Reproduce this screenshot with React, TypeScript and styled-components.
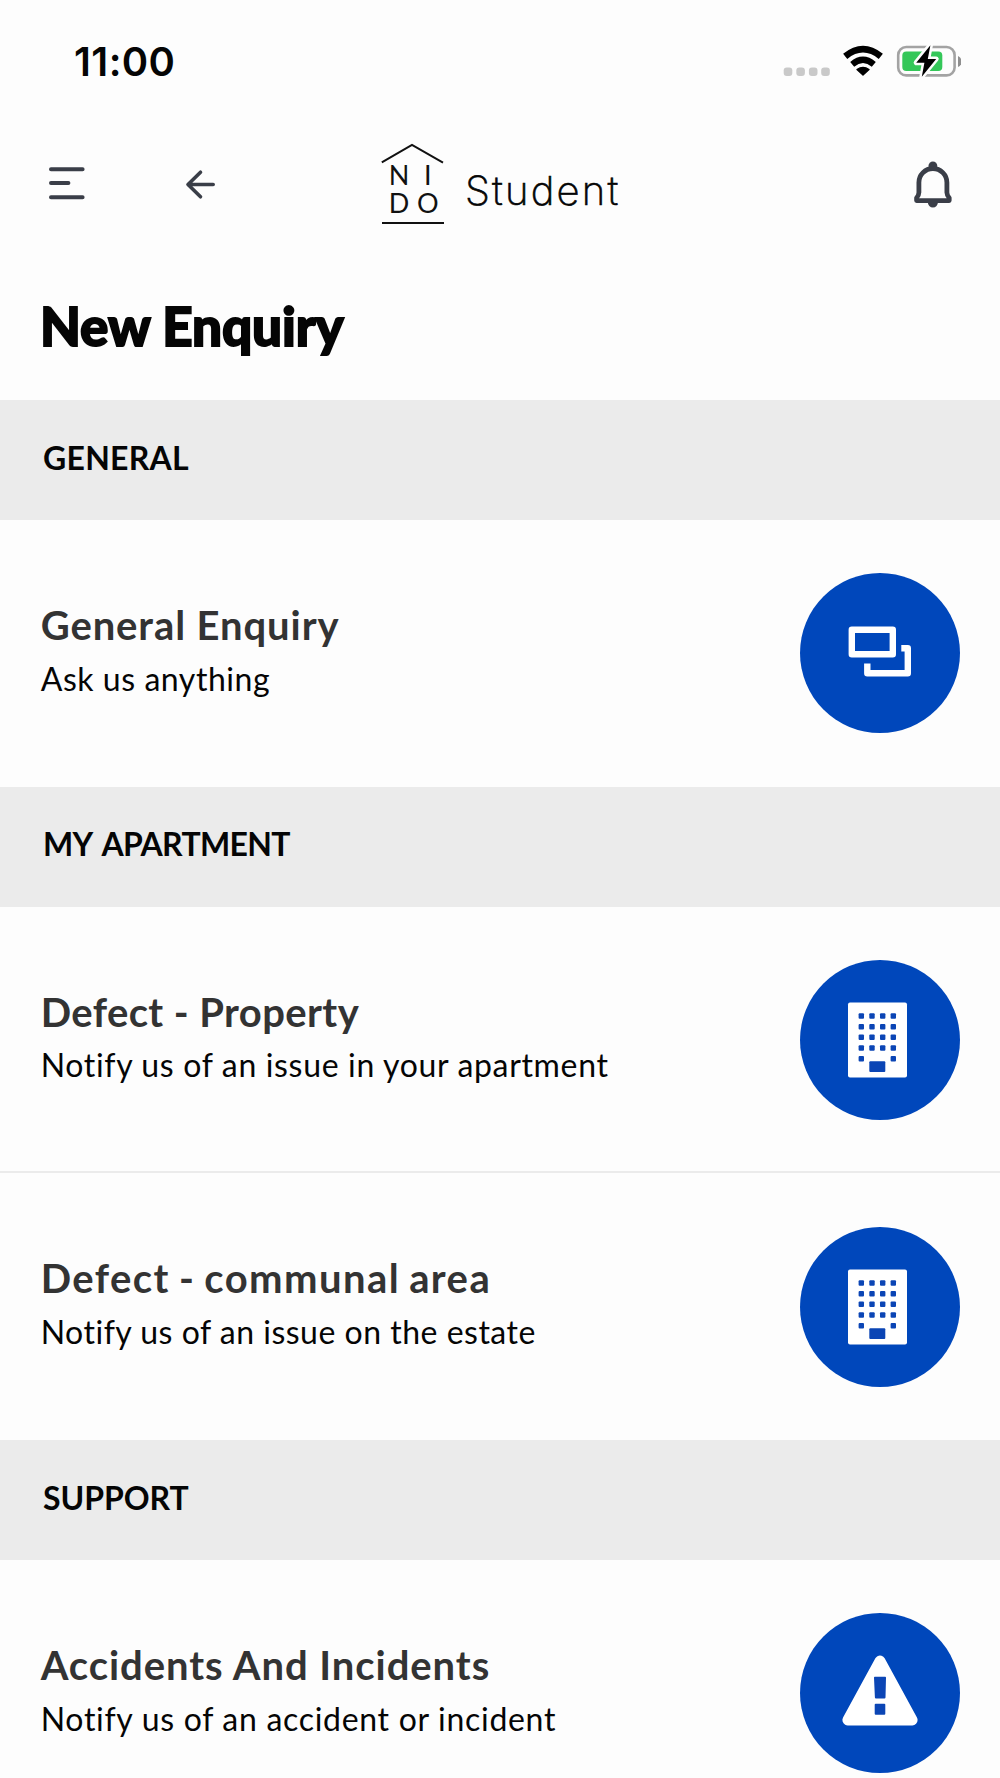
import React from 'react';
import styled, { createGlobalStyle } from 'styled-components';

const GlobalStyle = createGlobalStyle`
  * { box-sizing: border-box; }
  body { margin: 0; background: #fdfdfd; }
`;

const Screen = styled.main`
  display: flex;
  flex-direction: column;
  width: 1000px;
  height: 1778px;
  overflow: hidden;
  background: #fdfdfd;
  color: #050505;
  font-family: Lato, "Open Sans", sans-serif;

  svg { display: block; flex: none; }
`;

const StatusBar = styled.div`
  display: flex;
  flex: none;
  align-items: center;
  justify-content: space-between;
  height: 122px;
  padding: 0 39px 0 74px;
`;

const Clock = styled.time`
  padding-top: 1px;
  font: 600 40px/48px Inter, sans-serif;
  letter-spacing: 0.4px;
`;

const StatusIcons = styled.div`
  display: flex;
  align-items: center;
`;

const NavBar = styled.header`
  display: grid;
  grid-template-columns: 138px 242px 1fr 48px;
  align-items: center;
  flex: none;
  height: 126px;
  padding: 0 41px 2px 0;
`;

const NavButton = styled.button<{ $inset?: number }>`
  display: flex;
  padding: 0 0 0 ${(p) => p.$inset ?? 0}px;
  border: 0;
  background: none;
  color: #3a3e48;
`;

const Brand = styled.div`
  display: flex;
  align-items: center;
`;

const BrandName = styled.span`
  padding: 14px 0 0 19px;
  font: 200 40px/48px Inter, sans-serif;
  letter-spacing: 2.2px;
  -webkit-text-stroke: 0.6px currentColor;
`;

const LogoMark = styled.div`
  display: flex;
  flex-direction: column;
  width: 66px;
  height: 84px;
`;

const LogoLetters = styled.div`
  display: grid;
  grid-template-columns: 28px 22px;
  grid-auto-rows: 28px;
  margin: 0 2px 0 2px;
  padding: 0 0 5px 6.8px;
  border-bottom: 2px solid #111;
  font-size: 27px;
  line-height: 28px;
  color: #111;
`;

const LogoLetter = styled.span<{ $centered?: boolean }>`
  display: flex;
  justify-content: ${(p) => (p.$centered ? 'center' : 'flex-start')};
`;

const PageTitle = styled.h1`
  flex: none;
  height: 152px;
  margin: 0;
  padding: 45.5px 40px 0;
  font-size: 53px;
  line-height: 64px;
  font-weight: 900;
  letter-spacing: -0.1px;
  -webkit-text-stroke: 1.8px currentColor;
`;

const SectionHeader = styled.h2<{ $tracking: number }>`
  display: flex;
  align-items: center;
  flex: none;
  height: 120px;
  margin: 0;
  padding: 0 43px 4px;
  background: #ebebeb;
  font-size: 32px;
  line-height: 38.4px;
  font-weight: 700;
  letter-spacing: ${(p) => p.$tracking}px;
  word-spacing: 4px;
`;

const Row = styled.a`
  display: flex;
  align-items: center;
  justify-content: space-between;
  flex: none;
  height: 266.67px;
  padding: 0 40px 0 40.7px;

  & + & { box-shadow: 0 -2px 0 #ebebeb; }
`;

const RowText = styled.div`
  display: flex;
  flex-direction: column;
  gap: 10.6px;
  padding-bottom: 7.4px;
  white-space: nowrap;
  font-variant-ligatures: none;
`;

const RowTitle = styled.span<{ $tracking: number; $wordGap?: number }>`
  color: #333;
  font-size: 40px;
  line-height: 48px;
  font-weight: 700;
  letter-spacing: ${(p) => p.$tracking}px;
  word-spacing: ${(p) => p.$wordGap ?? 0}px;
`;

const RowSubtitle = styled.span<{ $tracking: number }>`
  font-size: 32px;
  line-height: 38.4px;
  letter-spacing: ${(p) => p.$tracking}px;
`;

const Badge = styled.svg`
  width: 160px;
  height: 160px;
  border-radius: 50%;
  background: #0047bb;
`;

const SignalDots = () => (
  <svg width="58" height="40" viewBox="783 41 58 40" fill="#c9c9c9">
    {[783.7, 796.3, 808.9, 821.2].map((x) => (
      <rect key={x} x={x} y="67.5" width="8.6" height="8.6" rx="3" />
    ))}
  </svg>
);

const WifiIcon = () => (
  <svg width="54" height="40" viewBox="841 41 54 40" fill="none" stroke="#000">
    <path d="M845.2 56.4 Q863 42 880.8 56.4" strokeWidth="6.6" />
    <path d="M852.2 64.3 Q863 55.2 873.8 64.3" strokeWidth="6.2" />
    <path d="M857 69.6 Q863 65.2 869 69.6 L863 75Z" fill="#000" strokeWidth="1.4" strokeLinejoin="round" />
  </svg>
);

const BatteryIcon = () => (
  <svg width="66" height="40" viewBox="895 41 66 40">
    <rect x="898.2" y="47" width="56.4" height="28.4" rx="8" fill="none" stroke="#a3a3a3" strokeWidth="2.6" />
    <path d="M958 56 Q961.5 57.5 961.5 61.5 Q961.5 65.5 958 67Z" fill="#8f8f8f" />
    <rect x="902.3" y="51.5" width="40" height="19.6" rx="4" fill="#34c759" />
    <path
      d="M930.4 45.2 L916.2 62.7 H924.4 L921.8 76.8 L936.2 59 H927.8Z"
      fill="#000"
      stroke="#fdfdfd"
      strokeWidth="5"
      strokeLinejoin="round"
      paintOrder="stroke"
    />
  </svg>
);

const MenuIcon = () => (
  <svg width="40" height="36" viewBox="0 0 40 36" stroke="currentColor" strokeWidth="4" strokeLinecap="round">
    <path d="M4 3.2H35.6M4 17H21.4M4 31.2H35.6" />
  </svg>
);

const BackIcon = () => (
  <svg width="32" height="32" viewBox="0 0 32 32" fill="none" stroke="currentColor" strokeWidth="3.6" strokeLinecap="round" strokeLinejoin="round">
    <path d="M28.2 16.5H3M15.5 4.2L3 16.5L15.5 28.8" />
  </svg>
);

const BellIcon = () => (
  <svg width="44" height="50" viewBox="911 158 44 50" fill="currentColor">
    <circle cx="932.9" cy="164.8" r="4.4" />
    <path d="M927.8 201 A5.1 5.6 0 0 0 938 201Z" />
    <path
      d="M918.9 181.5 A14 14 0 0 1 946.9 181.5 V191.5 Q947 194.5 949.2 196.8 V199.6 H916.6 V196.8 Q918.8 194.5 918.9 191.5Z"
      fill="none"
      stroke="currentColor"
      strokeWidth="4.8"
      strokeLinejoin="round"
    />
  </svg>
);

const NidoLogo = () => (
  <LogoMark>
    <svg width="66" height="19" viewBox="380 142 66 19" overflow="visible">
      <path d="M381.8 162.4 L412 145 L443 162.6" fill="none" stroke="#111" strokeWidth="2" />
    </svg>
    <LogoLetters>
      <LogoLetter>N</LogoLetter>
      <LogoLetter $centered>I</LogoLetter>
      <LogoLetter>D</LogoLetter>
      <LogoLetter $centered>O</LogoLetter>
    </LogoLetters>
  </LogoMark>
);

const ChatBadge = () => (
  <Badge viewBox="0 0 160 160" fill="none" stroke="#fff" strokeWidth="6.4" strokeLinejoin="round">
    <rect x="51.8" y="56.8" width="41" height="24.5" />
    <path d="M67.3 90.6 V100.2 H107.8 V75.2 H101.3" />
  </Badge>
);

const windowColumns = [61.3, 72, 82.7, 93.3];
const windowRows = [56, 66.7, 77.3, 88, 98.7];

const BuildingBadge = () => (
  <Badge viewBox="0 0 160 160" fill="#0b45b5">
    <rect x="48" y="42.4" width="59" height="75" rx="2" fill="#fff" />
    {windowRows.map((y, r) =>
      windowColumns
        .filter((_, c) => r < 4 || c === 0 || c === 3)
        .map((x) => <rect key={`${x}-${y}`} x={x - 2.7} y={y - 2.7} width="5.4" height="5.4" rx="1" />),
    )}
    <rect x="69.3" y="101.3" width="16" height="10.7" rx="1" />
  </Badge>
);

const WarningBadge = () => (
  <Badge viewBox="0 0 160 160" fill="#0b45b5">
    <path d="M80 47.8 L47.7 107.1 H112.3Z" fill="#fff" stroke="#fff" strokeWidth="10.6" strokeLinejoin="round" />
    <path d="M74.8 63.7 H85.2 Q86.1 63.7 86 64.7 L85.5 84.6 Q85.4 85.6 84.5 85.6 H75.9 Q75 85.6 74.9 84.6 L74 64.7 Q73.9 63.7 74.8 63.7Z" />
    <rect x="74.7" y="90.7" width="10.6" height="11" rx="1" />
  </Badge>
);

const badges = { chat: ChatBadge, building: BuildingBadge, warning: WarningBadge };

interface Enquiry {
  title: string;
  titleTracking: number;
  titleWordGap?: number;
  subtitle: string;
  subtitleTracking: number;
  badge: keyof typeof badges;
}

const sections: { name: string; tracking: number; items: Enquiry[] }[] = [
  {
    name: 'GENERAL',
    tracking: 0.25,
    items: [
      { title: 'General Enquiry', titleTracking: 0.9, subtitle: 'Ask us anything', subtitleTracking: 0.55, badge: 'chat' },
    ],
  },
  {
    name: 'MY APARTMENT',
    tracking: -0.65,
    items: [
      { title: 'Defect - Property', titleTracking: 0.4, subtitle: 'Notify us of an issue in your apartment', subtitleTracking: 0.66, badge: 'building' },
      { title: 'Defect - communal area', titleTracking: 1.42, titleWordGap: -2, subtitle: 'Notify us of an issue on the estate', subtitleTracking: 0.5, badge: 'building' },
    ],
  },
  {
    name: 'SUPPORT',
    tracking: -0.05,
    items: [
      { title: 'Accidents And Incidents', titleTracking: 0.94, subtitle: 'Notify us of an accident or incident', subtitleTracking: 0.7, badge: 'warning' },
    ],
  },
];

export default function App() {
  return (
    <>
      <GlobalStyle />
      <Screen>
        <StatusBar>
          <Clock>11:00</Clock>
          <StatusIcons>
            <SignalDots />
            <WifiIcon />
            <BatteryIcon />
          </StatusIcons>
        </StatusBar>
        <NavBar>
          <NavButton $inset={47} aria-label="Menu"><MenuIcon /></NavButton>
          <NavButton $inset={47} aria-label="Back"><BackIcon /></NavButton>
          <Brand>
            <NidoLogo />
            <BrandName>Student</BrandName>
          </Brand>
          <NavButton aria-label="Notifications"><BellIcon /></NavButton>
        </NavBar>
        <PageTitle>New Enquiry</PageTitle>
        {sections.map((section) => (
          <React.Fragment key={section.name}>
            <SectionHeader $tracking={section.tracking}>{section.name}</SectionHeader>
            {section.items.map((item) => {
              const Icon = badges[item.badge];
              return (
                <Row key={item.title}>
                  <RowText>
                    <RowTitle $tracking={item.titleTracking} $wordGap={item.titleWordGap}>{item.title}</RowTitle>
                    <RowSubtitle $tracking={item.subtitleTracking}>{item.subtitle}</RowSubtitle>
                  </RowText>
                  <Icon />
                </Row>
              );
            })}
          </React.Fragment>
        ))}
      </Screen>
    </>
  );
}
